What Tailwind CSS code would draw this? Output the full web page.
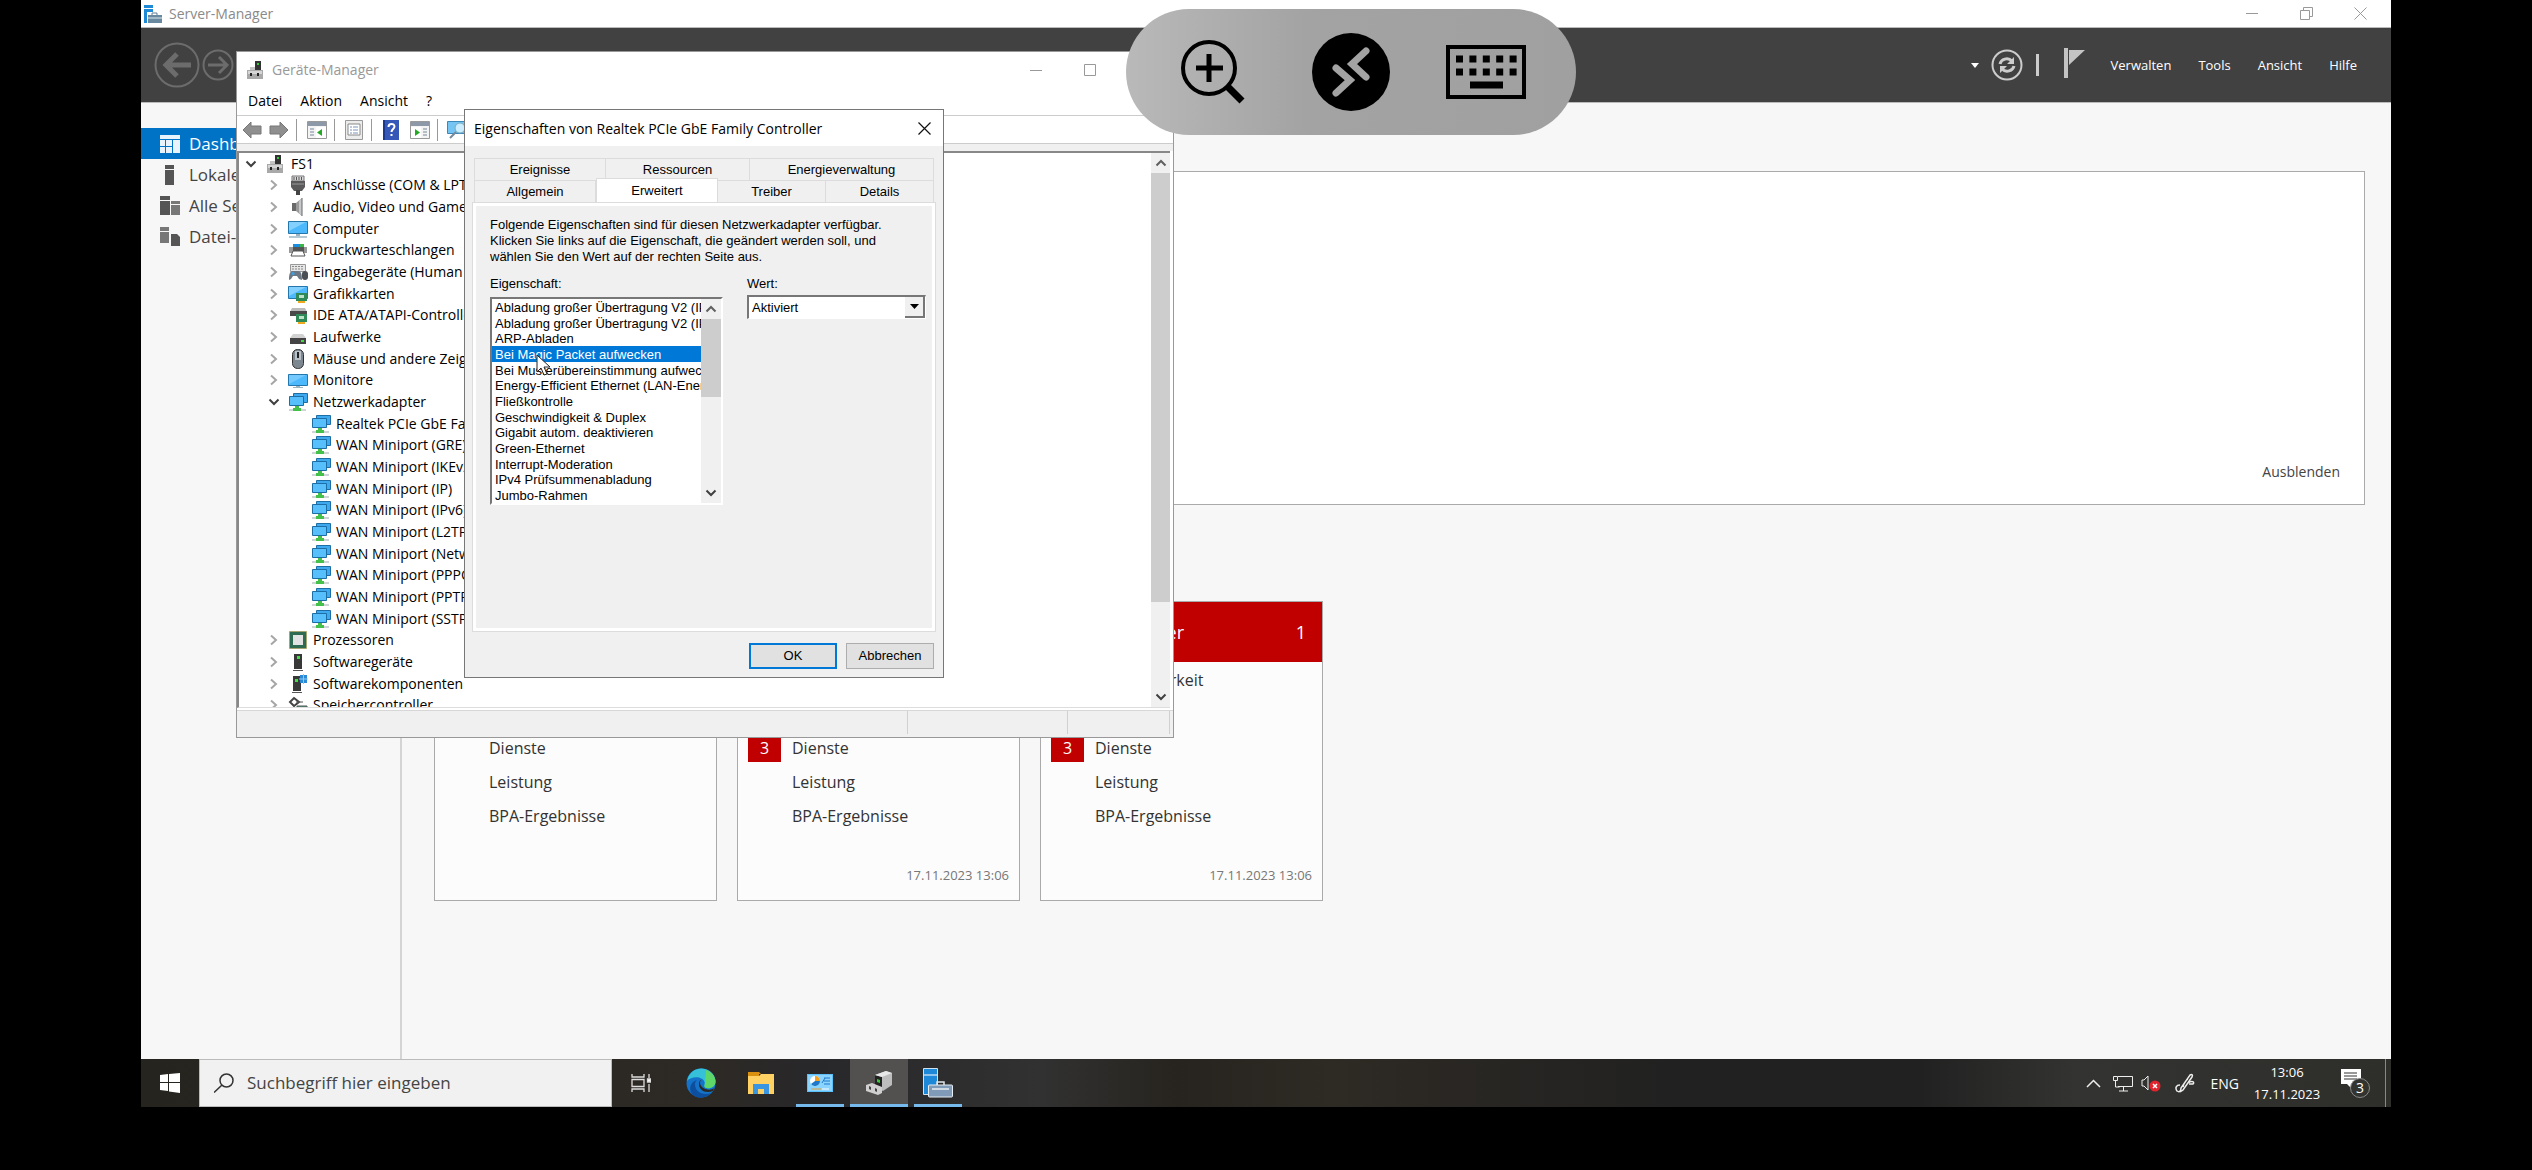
<!DOCTYPE html>
<html lang="de">
  <head>
    <meta charset="UTF-8" />
    <meta name="viewport" content="width=device-width, initial-scale=1.0" />
    <script src="https://cdn.jsdelivr.net/npm/@tailwindcss/browser@4"></script>
    <title>Server-Manager</title>
  </head>
  <body class="bg-black font-['Open_Sans','Noto_Sans',sans-serif]">
    <!-- ICONS -->
    <svg class="hidden">
      <symbol id="i-host" viewBox="0 0 16 18">
        <path d="M8 0h6v9H8z" fill="#333" />
        <path d="M10 2h2v2h-2z" fill="#3c3" />
        <path d="M3 6h5v4H3z" fill="#c4c4c4" />
        <path d="M0 9h16v9H0z" fill="#a9a9a9" />
        <path d="M1 10h14v3H1z" fill="#d5d5d5" />
        <path d="M3 12h2v3H3zM10 12h2v3h-2z" fill="#222" />
      </symbol>
      <symbol id="i-port" viewBox="0 0 20 20">
        <path d="M4 1h12v5H4z" fill="#d8d8d8" stroke="#777" />
        <path d="M6 2v3M8.500 2v3M11 2v3M13.500 2v3" stroke="#555" />
        <path d="M3 6h14v6l-3 4H6l-3-4z" fill="#5a5a5a" />
        <path d="M4 9h12" stroke="#999" />
        <path d="M8 15h4v5H8z" fill="#444" />
      </symbol>
      <symbol id="i-audio" viewBox="0 0 20 20">
        <path d="M4 6h4v8H4z" fill="#6a6a6a" />
        <path d="M8 6l6-5v18l-6-5z" fill="#9b9b9b" />
        <path d="M11 4l3-3v18l-3-3z" fill="#c5c9cc" />
        <path d="M14 1v18" stroke="#666" />
      </symbol>
      <symbol id="i-computer" viewBox="0 0 20 20">
        <path d="M.5 2.500h19v12H.5z" fill="#4db8fb" stroke="#2377ad" />
        <path d="M1 3h17L1 12z" fill="#84d1ff" />
        <path d="M8 15h4v2H8z" fill="#9fb4c0" />
        <path d="M1 17h18v2H1z" fill="#b4c8d4" />
      </symbol>
      <symbol id="i-printer" viewBox="0 0 20 20">
        <path d="M5 4h11v4H5z" fill="#1b8de0" />
        <path d="M12 4h4v4h-4z" fill="#39b54a" />
        <path d="M1 7h18v6H1z" fill="#555" />
        <path d="M1 7h4v6H1zM16 7h3v6h-3z" fill="#999" />
        <path d="M5 11h10l2 5H3z" fill="#fff" stroke="#555" />
      </symbol>
      <symbol id="i-hid" viewBox="0 0 20 20">
        <path d="M2.500 2.500h15v7h-15z" fill="#e6e6e6" stroke="#999" />
        <path d="M4 4.500h12M4 7h12" stroke="#888" stroke-dasharray="2 1" />
        <path d="M1 18c0-6 1-9 4-9h5c3 0 4 3 4 9l-3-1-2-3H5l-2 3z" fill="#6b7883" />
        <circle cx="5" cy="11.500" r="1.500" fill="#3aa0e8" />
        <rect x="14" y="9" width="6" height="9" rx="3" fill="#4a4f55" />
      </symbol>
      <symbol id="i-gpu" viewBox="0 0 20 20">
        <path d="M.5 2.500h19v12H.5z" fill="#4db8fb" stroke="#2377ad" />
        <path d="M1 3h17L1 12z" fill="#84d1ff" />
        <path d="M8 9h11v8H8z" fill="#2f8a57" />
        <path d="M11 11h5v3h-5z" fill="#bfe0c8" />
        <path d="M10 17h7v2h-7z" fill="#f0a91e" />
      </symbol>
      <symbol id="i-ide" viewBox="0 0 20 20">
        <path d="M4 3h13l2 4H2z" fill="#bbb" />
        <path d="M2 6h17v5H2z" fill="#4a4a4a" />
        <path d="M8 9h11v8H8z" fill="#2f8a57" />
        <path d="M11 11h5v3h-5z" fill="#bfe0c8" />
        <path d="M10 17h7v2h-7z" fill="#f0a91e" />
      </symbol>
      <symbol id="i-drive" viewBox="0 0 20 20">
        <path d="M5 7h10l3 4H2z" fill="#d2d2d2" />
        <path d="M2 11h16v6H2z" fill="#444" />
        <path d="M13 13h3v2h-3z" fill="#3fdc3f" />
      </symbol>
      <symbol id="i-mouse" viewBox="0 0 20 20">
        <rect x="4.500" y=".5" width="11" height="19" rx="5" fill="#7d8790" stroke="#333" />
        <path d="M7 2h6v9H7z" fill="#b9c2ca" />
        <path d="M10 3v6" stroke="#222" stroke-width="2" />
      </symbol>
      <symbol id="i-monitor" viewBox="0 0 20 20">
        <path d="M.5 4.500h19v11H.5z" fill="#4db8fb" stroke="#2377ad" />
        <path d="M1 5h17L1 14z" fill="#74caff" />
        <path d="M8 16h4v1H8zM5 17h10v1H5z" fill="#9fb4c0" />
      </symbol>
      <symbol id="i-net" viewBox="0 0 20 20">
        <path d="M5.500 1.500h14v9h-14z" fill="#3fa9f0" stroke="#1d6ea5" />
        <path d="M1.500 4.500h14v9h-14z" fill="#56bffc" stroke="#1d6ea5" />
        <path d="M1 17h17v2H1z" fill="#cfd4d6" />
        <path d="M7 14h4v2h2v3H5v-3h2z" fill="#45c04a" />
      </symbol>
      <symbol id="i-cpu" viewBox="0 0 20 20">
        <rect x="1.500" y="1.500" width="17" height="17" fill="#2f6b50" stroke="#b8943a" stroke-dasharray="1 1" />
        <path d="M5 5h10v10H5z" fill="#e2e2e2" />
      </symbol>
      <symbol id="i-soft" viewBox="0 0 20 20">
        <path d="M6 2h8v15H6z" fill="#383838" />
        <path d="M9 4h3v3H9z" fill="#41e041" />
        <path d="M5 18h10v1H5z" fill="#555" />
      </symbol>
      <symbol id="i-comp" viewBox="0 0 20 20">
        <path d="M5 2h8v15H5z" fill="#383838" />
        <path d="M7 5h3v3H7z" fill="#41e041" />
        <path d="M4 18h10v1H4z" fill="#555" />
        <path d="M12 1h7v8h-7z" fill="#2a8ad6" />
        <path d="M11 5h9M15.500 0v10" stroke="#8cc8f4" />
      </symbol>
      <symbol id="i-storage" viewBox="0 0 20 20">
        <path d="M6 3l5 4-5 4-4-4z" fill="#fff" stroke="#444" stroke-width="2" />
        <path d="M8 7h7M9 11h10v5H9z" stroke="#555" fill="#4d9a77" />
      </symbol>
      <symbol id="i-right" viewBox="0 0 10 12">
        <path d="M2 1.500l5 4.500-5 4.500" fill="none" stroke="#a6a6a6" stroke-width="2" />
      </symbol>
      <symbol id="i-down" viewBox="0 0 12 10">
        <path d="M1.500 2.500L6 7l4.500-4.500" fill="none" stroke="#404040" stroke-width="2" />
      </symbol>
      <symbol id="i-up" viewBox="0 0 12 10">
        <path d="M1.500 7.500L6 3l4.500 4.500" fill="none" stroke="#606060" stroke-width="2" />
      </symbol>
    </svg>

    <div class="min-h-screen flex flex-col px-[141px] pb-[63px]">
      <div class="relative flex-1 flex flex-col bg-[#f7f7f7] overflow-hidden">
        <!-- SERVER-MANAGER TITLE BAR -->
        <div class="h-7 flex items-center bg-white border-b border-[#bbb] pl-[3px] pr-6">
          <svg class="w-[18px] h-[18px]" viewBox="0 0 18 18">
            <path d="M0 0h9v3H0zM0 4h9v14H0z" fill="#1e8ad6" />
            <path d="M3 7h15v11H3z" fill="#fff" />
            <path d="M8 10V8h5v2" fill="none" stroke="#5d7d94" />
            <path d="M4 10h14v8H4z" fill="#68899f" />
            <path d="M4 13h14" stroke="#dfe8ee" />
          </svg>
          <h1 class="ml-[7px] text-[14px] leading-5 text-[#8a8a8a]">Server-Manager</h1>
          <div class="ml-auto flex items-center gap-[41px]">
            <button aria-label="Minimieren">
              <svg class="w-[13px] h-[13px]" viewBox="0 0 13 13"><path d="M0 6.500h12" stroke="#999" /></svg>
            </button>
            <button aria-label="Wiederherstellen">
              <svg class="w-[13px] h-[13px]" viewBox="0 0 13 13">
                <path d="M.5 3.500h9v9h-9zM3.500 3V.5h9v9H10" fill="none" stroke="#999" />
              </svg>
            </button>
            <button aria-label="Schließen">
              <svg class="w-[13px] h-[13px]" viewBox="0 0 13 13"><path d="M.5.5l12 12M12.500.5l-12 12" stroke="#999" /></svg>
            </button>
          </div>
        </div>

        <!-- HEADER -->
        <div class="h-[75px] flex items-center bg-[#414141] border-b border-[#bbb] pl-[13px] pr-[34px]">
          <svg class="w-[46px] h-[46px]" viewBox="0 0 46 46" fill="none" stroke="#6c6c6c">
            <circle cx="23" cy="23" r="21.500" stroke-width="2" />
            <path d="M37 23H12M23 12L12 23l11 11" stroke-width="5" />
          </svg>
          <svg class="ml-0.5 w-8 h-8" viewBox="0 0 32 32" fill="none" stroke="#6c6c6c">
            <circle cx="16" cy="16" r="14.500" stroke-width="2" />
            <path d="M6 16h18M17 8l8 8-8 8" stroke-width="3" />
          </svg>
          <div class="ml-auto flex items-center">
            <svg class="w-2 h-[5px]" viewBox="0 0 8 5"><path d="M0 0h8L4 5z" fill="#fff" /></svg>
            <button aria-label="Aktualisieren" class="ml-3">
              <svg class="w-8 h-8" viewBox="0 0 32 32" fill="none" stroke="#ccc">
                <circle cx="16" cy="16" r="14.500" stroke-width="2" />
                <path d="M9 15c1-5 8-7 12-3M23 17c-1 5-8 7-12 3" stroke-width="3" />
                <path d="M23 8v7h-7zM9 24v-7h7z" fill="#ccc" stroke="none" />
              </svg>
            </button>
            <div class="ml-[13px] w-[3px] h-[22px] bg-[#ccc]"></div>
            <svg class="ml-[25px] mb-1 w-[21px] h-[30px]" viewBox="0 0 21 30">
              <path d="M0 0h4v30H0zM5 2h16L5 17z" fill="#c4c4c4" />
            </svg>
            <nav class="ml-[26px] flex gap-[27px] text-[13px] leading-5 text-white">
              <a href="#">Verwalten</a>
              <a href="#">Tools</a>
              <a href="#">Ansicht</a>
              <a href="#">Hilfe</a>
            </nav>
          </div>
        </div>

        <!-- CONTENT -->
        <div class="flex-1 flex">
          <nav class="w-[261px] shrink-0 border-r-2 border-[#d4d4d4] pt-[25px] text-[17px] leading-[31px] text-[#444]">
            <a href="#" class="flex items-center pl-[19px] bg-[#0173c7] text-white">
              <svg class="w-5 h-[18px]" viewBox="0 0 20 18" fill="#e8f3fb">
                <path d="M0 0h20v4H0zM0 5h5v6H0zM0 12h5v6H0zM6 5h6v6H6zM6 12h6v6H6zM13 5h7v13h-7z" />
              </svg>
              <span class="ml-[9px]">Dashboard</span>
            </a>
            <a href="#" class="flex items-center pl-[19px]">
              <svg class="w-5 h-5" viewBox="0 0 20 20" fill="#555"><path d="M5 0h9v4H5zM5 5h9v15H5z" /></svg>
              <span class="ml-[9px]">Lokaler Server</span>
            </a>
            <a href="#" class="flex items-center pl-[19px]">
              <svg class="w-5 h-5" viewBox="0 0 20 20" fill="#555">
                <path d="M0 0h10v4H0zM0 5h10v14H0z" /><path d="M11 5h9v3h-9zM11 9h9v10h-9z" fill="#777" />
              </svg>
              <span class="ml-[9px]">Alle Server</span>
            </a>
            <a href="#" class="flex items-center pl-[19px]">
              <svg class="w-5 h-5" viewBox="0 0 20 20" fill="#777">
                <path d="M0 0h9v4H0zM0 5h9v11H0z" /><path d="M11 7h6l3 3v9h-9z" fill="#555" />
              </svg>
              <span class="ml-[9px]">Datei-/Speicherdienste</span>
            </a>
          </nav>

          <main class="flex-1 pt-[68px] pl-8 pr-[26px]">
            <div class="h-[334px] flex justify-end items-end bg-white border border-[#aaa] pr-6 pb-[22px]">
              <button class="text-[14px] leading-5 text-[#444]">Ausblenden</button>
            </div>

            <div class="mt-[96px] flex gap-5 text-[16px] text-[#333]">
              <section class="w-[283px] h-[300px] flex flex-col bg-[#fcfcfc] border border-[#aaa]">
                <h2 class="h-[60px] flex items-center px-4 text-[18px]">Datei-/Speicherdienste</h2>
                <ul class="mt-px pl-[54px] leading-[34px]">
                  <li>Verwaltbarkeit</li>
                  <li>Ereignisse</li>
                  <li>Dienste</li>
                  <li>Leistung</li>
                  <li>BPA-Ergebnisse</li>
                </ul>
              </section>
              <section class="w-[283px] h-[300px] flex flex-col bg-[#fcfcfc] border border-[#aaa]">
                <h2 class="h-[60px] flex items-center px-4 text-[18px] bg-[#c00000] text-white">Lokaler Server</h2>
                <ul class="mt-px pl-[10px] leading-[34px]">
                  <li class="pl-11">Verwaltbarkeit</li>
                  <li class="pl-11">Ereignisse</li>
                  <li class="flex items-center">
                    <span class="w-[33px] h-7 mr-[11px] bg-[#c00000] text-white text-center leading-7">3</span>Dienste
                  </li>
                  <li class="pl-11">Leistung</li>
                  <li class="pl-11">BPA-Ergebnisse</li>
                </ul>
                <p class="mt-auto mb-[13px] pr-[10px] text-right text-[13px] leading-6 text-[#777]">17.11.2023 13:06</p>
              </section>
              <section class="w-[283px] h-[300px] flex flex-col bg-[#fcfcfc] border border-[#aaa]">
                <h2 class="h-[60px] flex items-center pl-[54px] pr-4 text-[18px] bg-[#c00000] text-white">
                  Alle Server <span class="ml-auto">1</span>
                </h2>
                <ul class="mt-px pl-[10px] leading-[34px]">
                  <li class="pl-11">Verwaltbarkeit</li>
                  <li class="pl-11">Ereignisse</li>
                  <li class="flex items-center">
                    <span class="w-[33px] h-7 mr-[11px] bg-[#c00000] text-white text-center leading-7">3</span>Dienste
                  </li>
                  <li class="pl-11">Leistung</li>
                  <li class="pl-11">BPA-Ergebnisse</li>
                </ul>
                <p class="mt-auto mb-[13px] pr-[10px] text-right text-[13px] leading-6 text-[#777]">17.11.2023 13:06</p>
              </section>
            </div>
          </main>
        </div>

        <!-- TASKBAR -->
        <footer class="h-12 flex bg-[linear-gradient(90deg,#26241f_0%,#2d2a25_25%,#28272a_30%,#313131_40%,#27241f_46%,#2e2a24_53%,#212121_68%,#212121_79%,#333331_86%,#2e2e2b_100%)]">
          <button aria-label="Start" class="w-[58px] flex items-center justify-center">
            <svg class="w-5 h-5" viewBox="0 0 20 20" fill="#fff">
              <path d="M0 2l8-1v8H0zM9 1l11-1v9H9zM0 10h8v8l-8-1zM9 10h11v10L9 18.500z" />
            </svg>
          </button>
          <label class="w-[413px] flex items-center bg-[#f1f1f1] border border-[#bbb] pl-[14px]">
            <svg class="w-5 h-5 shrink-0" viewBox="0 0 20 20" fill="none" stroke="#333" stroke-width="1.500">
              <circle cx="12.500" cy="7.500" r="6.500" /><path d="M8 12L0 19.500" />
            </svg>
            <input
              type="text"
              aria-label="Suche"
              placeholder="Suchbegriff hier eingeben"
              class="ml-[13px] w-full text-[17px] placeholder:text-[#444] outline-none"
            />
          </label>
          <button aria-label="Taskansicht" class="w-[58px] flex items-center justify-center">
            <svg class="w-5 h-[18px]" viewBox="0 0 20 18" fill="none" stroke="#ddd" stroke-width="1.300">
              <path d="M1 0v3h12V0M1 18v-3h12v3M1 5.500h12v7H1zM18 0v4M18 10v8" /><path d="M16.500 5h3v3h-3z" fill="#fff" />
            </svg>
          </button>
          <button aria-label="Edge" class="w-[62px] flex items-center justify-center">
            <svg class="w-[30px] h-[30px]" viewBox="0 0 30 30">
              <circle cx="15" cy="15" r="14.500" fill="#1473c9" />
              <path d="M1 13C3 3 11 0 16 .5 25 1 30 8 29.500 14c-.5 5-5 7-9 6-4-1-1-3-2-6-2-6-13-6-17.500-1z" fill="#35c1d8" />
              <path d="M20 2c6 2 10 8 9.500 12-.5 5-5 7-9 6-3-1-2-2-1.500-5z" fill="#5fd668" />
              <path d="M9 16c0 8 8 12 16 9-5 6-15 6-19 1-4-6-1-12 5-14-1 1-2 2-2 4z" fill="#0d4f9e" />
              <path d="M15 12c-2 2-1 7 4 9 4 1 7 1 9-1l-1 3c-8 3-14-1-14-7 0-2 1-4 2-4z" fill="#2a2825" />
            </svg>
          </button>
          <button aria-label="Explorer" class="w-[58px] flex items-center justify-center">
            <svg class="w-[26px] h-[22px]" viewBox="0 0 26 22">
              <path d="M0 0h11l2 2h-2v2H0z" fill="#d9900f" />
              <path d="M0 4h11l2-2h13v20H0z" fill="#ffd163" />
              <path d="M5 12h16v10h-5v-5h-6v5H5z" fill="#3a95e0" />
            </svg>
          </button>
          <button aria-label="Systemsteuerung" class="w-[60px] flex flex-col items-center">
            <svg class="mt-[15px] w-[26px] h-[18px]" viewBox="0 0 26 18">
              <path d="M0 0h26v18H0z" fill="#5cc0fb" /><path d="M1 1h24v16H1z" fill="#8ad4ff" />
              <circle cx="8" cy="7" r="5" fill="#fff" /><path d="M8 7V2a5 5 0 0 1 5 5z" fill="#f3a01c" />
              <path d="M8 7h5a5 5 0 0 1-9 3z" fill="#2079c8" />
              <path d="M17 4h6M17 7h6M17 10h6M15 9l3-5" stroke="#2079c8" /><path d="M4 15h10" stroke="#e2a13a" /><path d="M15 15h7" stroke="#fff" />
            </svg>
            <span class="mt-auto w-12 h-[3px] bg-[#76b9ed]"></span>
          </button>
          <button aria-label="Geräte-Manager" class="w-[58px] flex flex-col items-center bg-[#525150]">
            <svg class="mt-3 w-[26px] h-6" viewBox="0 0 26 24">
              <path d="M9 4l11-4 6 2v12l-9 6-8-4z" fill="#bdbdbd" /><path d="M9 4l7 2v12l-7-3z" fill="#222" />
              <path d="M9 4l11-4 6 2-10 4z" fill="#e8e8e8" /><path d="M11 8l3 1v3l-3-1z" fill="#3c3" />
              <path d="M0 14l6-2 10 4v6l-4 2L0 20z" fill="#cfcfcf" /><path d="M3 15l2 1v3l-2-1zM9 17l2 1v3l-2-1z" fill="#444" />
            </svg>
            <span class="mt-auto w-full h-[3px] bg-[#76b9ed]"></span>
          </button>
          <button aria-label="Server-Manager" class="w-[60px] flex flex-col items-center">
            <svg class="mt-[9px] w-[30px] h-[30px]" viewBox="0 0 30 30">
              <path d="M.5.5h14v26H.5z" fill="#1e88d8" stroke="#cfe2f0" /><path d="M1 7h13" stroke="#fff" />
              <path d="M14 18v-4h7v4" fill="none" stroke="#dfe6ec" stroke-width="1.500" />
              <rect x="5.500" y="17" width="24" height="12" rx="1" fill="#7f9bb8" stroke="#e8eef3" />
              <path d="M9 21h17" stroke="#e8eef3" stroke-width="1.500" />
            </svg>
            <span class="mt-auto w-12 h-[3px] bg-[#76b9ed]"></span>
          </button>

          <!-- TRAY -->
          <div class="ml-auto flex items-center text-white">
            <svg class="w-[15px] h-[9px]" viewBox="0 0 15 9"><path d="M1 8l6.500-6.500L14 8" fill="none" stroke="#eee" stroke-width="1.500" /></svg>
            <svg class="ml-3 w-5 h-[17px]" viewBox="0 0 20 17" fill="none" stroke="#eee">
              <path d="M5 1.500h14.500v10H5M10.500 12v4M6 16h9M.5 1.500h4v4h-4zM2.500 6v6h4" />
            </svg>
            <svg class="ml-2 w-5 h-[18px]" viewBox="0 0 20 18">
              <path d="M1 6h2l4-4v14l-4-4H1z" fill="none" stroke="#eee" />
              <circle cx="14" cy="12" r="5.500" fill="#e0252f" /><path d="M12 10l4 4M16 10l-4 4" stroke="#fff" stroke-width="1.500" />
            </svg>
            <svg class="ml-[14px] w-5 h-5" viewBox="0 0 20 20" fill="none" stroke="#eee" stroke-width="1.500">
              <path d="M5 12c-4 0-5 3-3 6 3 2 4-1 4-3L15 2c2-1 3 0 2 2L8 17l-3 2M13 6c-3 2-4 4-5 8M13 10c4-3 7-1 5 1h-4" />
            </svg>
            <span class="ml-4 text-[14px]">ENG</span>
            <div class="ml-4 w-16 flex flex-col items-center text-[13px] leading-[22px] whitespace-nowrap">
              <span>13:06</span>
              <span>17.11.2023</span>
            </div>
            <button aria-label="Benachrichtigungen" class="ml-[22px]">
              <svg class="w-[30px] h-[30px]" viewBox="0 0 30 30">
                <path d="M0 1h20v15h-9v5l-5-5H0z" fill="#fff" />
                <path d="M3 5h13M3 8h13M3 11h13" stroke="#333" />
                <circle cx="19" cy="20" r="9.500" fill="#333330" stroke="#888" />
                <text x="19" y="25" fill="#fff" font-size="14" text-anchor="middle">3</text>
              </svg>
            </button>
            <div class="ml-[14px] mr-[5px] w-px h-12 bg-[#888]"></div>
          </div>
        </footer>

        <!-- DEVICE MANAGER -->
        <section class="absolute left-[95px] top-[51px] w-[938px] h-[687px] flex flex-col bg-white border border-[#999] text-[14px] leading-5">
          <div class="h-[35px] shrink-0 flex items-center pl-[10px]">
            <svg class="w-4 h-[18px]"><use href="#i-host" /></svg>
            <h2 class="ml-[9px] leading-5 text-[#999]">Geräte-Manager</h2>
            <button aria-label="Minimieren" class="ml-auto">
              <svg class="w-3 h-3" viewBox="0 0 12 12"><path d="M0 6.500h12" stroke="#999" /></svg>
            </button>
            <button aria-label="Maximieren" class="ml-[42px] mr-[77px]">
              <svg class="w-3 h-3" viewBox="0 0 12 12"><path d="M.5.5h11v11H.5z" fill="none" stroke="#999" /></svg>
            </button>
          </div>
          <nav class="h-7 shrink-0 flex items-center gap-[18px] pl-[11px] text-black">
            <button>Datei</button>
            <button>Aktion</button>
            <button>Ansicht</button>
            <button>?</button>
          </nav>
          <div class="h-[29px] shrink-0 flex items-center border-y border-[#ccc] pl-[5px]">
            <svg class="w-5 h-[18px]" viewBox="0 0 20 18"><path d="M1 9l8-8v4h10v8H9v4z" fill="#8f8f8f" stroke="#777" /></svg>
            <svg class="ml-[7px] w-5 h-[18px]" viewBox="0 0 20 18"><path d="M19 9l-8-8v4H1v8h10v4z" fill="#8f8f8f" stroke="#777" /></svg>
            <span class="ml-[7px] w-px h-[22px] bg-[#999]"></span>
            <svg class="ml-[10px] w-5 h-[18px]" viewBox="0 0 20 18">
              <path d="M.5.5h19v17H.5z" fill="#f4f4f4" stroke="#999" /><path d="M1 1h18v4H1z" fill="#8d99a8" />
              <path d="M3 8h4M3 11h4M3 14h4" stroke="#789" /><path d="M9 6h10v11H9z" fill="#fff" /><path d="M15 8v7l-5-3.500z" fill="#25a825" />
            </svg>
            <span class="ml-[7px] w-px h-[22px] bg-[#999]"></span>
            <svg class="ml-[10px] w-[18px] h-5" viewBox="0 0 18 20">
              <path d="M.5.5h17v19H.5z" fill="#ececec" stroke="#999" /><path d="M3 4h12v11H3z" fill="#fff" stroke="#888" />
              <path d="M5 7h2M5 10h2M5 13h2M8 7h5M8 10h5M8 13h5" stroke="#7a93b8" />
            </svg>
            <span class="ml-2 w-px h-[22px] bg-[#999]"></span>
            <svg class="ml-[11px] w-4 h-5" viewBox="0 0 16 20">
              <path d="M0 0h16v20H0z" fill="#3457b8" /><path d="M0 0h2v20H0z" fill="#1c388c" />
              <path d="M5.500 7c0-4 6-4 6-.5 0 2.500-3 2.500-3 5.500M8.500 14v2" fill="none" stroke="#fff" stroke-width="2" />
            </svg>
            <svg class="ml-[11px] w-5 h-[18px]" viewBox="0 0 20 18">
              <path d="M.5.5h19v17H.5z" fill="#f4f4f4" stroke="#999" /><path d="M1 1h18v4H1z" fill="#8d99a8" />
              <path d="M13 8h4M13 11h4M13 14h4" stroke="#789" /><path d="M1 6h10v11H1z" fill="#fff" /><path d="M5 8v7l5-3.500z" fill="#25a825" />
            </svg>
            <span class="ml-[7px] w-px h-[22px] bg-[#999]"></span>
            <svg class="ml-[9px] w-5 h-[18px]" viewBox="0 0 20 18">
              <path d="M.5.5h19v12H.5z" fill="#74c4f4" stroke="#3b87b8" />
              <circle cx="13" cy="7" r="5" fill="#c9ecff" stroke="#7ab" /><path d="M9 11l-6 6" stroke="#789" stroke-width="2" />
            </svg>
          </div>
          <div class="h-[7px] shrink-0 bg-[#f0f0f0]"></div>
          <div class="h-[557px] shrink-0 flex bg-white border-t-2 border-l-2 border-b border-t-[#888] border-l-[#888] border-b-[#ddd] mr-[3px] overflow-hidden">
            <ul class="flex-1 h-[563px] flex flex-col text-black whitespace-nowrap *:flex-1 *:flex *:items-center">
              <li class="pl-[6px]"><svg class="w-3 h-[10px] mr-[10px]"><use href="#i-down" /></svg><svg class="w-4 h-[18px] mr-2"><use href="#i-host" /></svg>FS1</li>
              <li class="pl-[30px]"><svg class="w-[10px] h-3 mr-[9px]"><use href="#i-right" /></svg><svg class="w-5 h-5 mr-[5px]"><use href="#i-port" /></svg>Anschlüsse (COM &amp; LPT)</li>
              <li class="pl-[30px]"><svg class="w-[10px] h-3 mr-[9px]"><use href="#i-right" /></svg><svg class="w-5 h-5 mr-[5px]"><use href="#i-audio" /></svg>Audio, Video und Gamecontroller</li>
              <li class="pl-[30px]"><svg class="w-[10px] h-3 mr-[9px]"><use href="#i-right" /></svg><svg class="w-5 h-5 mr-[5px]"><use href="#i-computer" /></svg>Computer</li>
              <li class="pl-[30px]"><svg class="w-[10px] h-3 mr-[9px]"><use href="#i-right" /></svg><svg class="w-5 h-5 mr-[5px]"><use href="#i-printer" /></svg>Druckwarteschlangen</li>
              <li class="pl-[30px]"><svg class="w-[10px] h-3 mr-[9px]"><use href="#i-right" /></svg><svg class="w-5 h-5 mr-[5px]"><use href="#i-hid" /></svg>Eingabegeräte (Human Interface Devices)</li>
              <li class="pl-[30px]"><svg class="w-[10px] h-3 mr-[9px]"><use href="#i-right" /></svg><svg class="w-5 h-5 mr-[5px]"><use href="#i-gpu" /></svg>Grafikkarten</li>
              <li class="pl-[30px]"><svg class="w-[10px] h-3 mr-[9px]"><use href="#i-right" /></svg><svg class="w-5 h-5 mr-[5px]"><use href="#i-ide" /></svg>IDE ATA/ATAPI-Controller</li>
              <li class="pl-[30px]"><svg class="w-[10px] h-3 mr-[9px]"><use href="#i-right" /></svg><svg class="w-5 h-5 mr-[5px]"><use href="#i-drive" /></svg>Laufwerke</li>
              <li class="pl-[30px]"><svg class="w-[10px] h-3 mr-[9px]"><use href="#i-right" /></svg><svg class="w-5 h-5 mr-[5px]"><use href="#i-mouse" /></svg>Mäuse und andere Zeigegeräte</li>
              <li class="pl-[30px]"><svg class="w-[10px] h-3 mr-[9px]"><use href="#i-right" /></svg><svg class="w-5 h-5 mr-[5px]"><use href="#i-monitor" /></svg>Monitore</li>
              <li class="pl-[29px]"><svg class="w-3 h-[10px] mr-2"><use href="#i-down" /></svg><svg class="w-5 h-5 mr-[5px]"><use href="#i-net" /></svg>Netzwerkadapter</li>
              <li class="pl-[72px]"><svg class="w-5 h-5 mr-[5px]"><use href="#i-net" /></svg>Realtek PCIe GbE Family Controller</li>
              <li class="pl-[72px]"><svg class="w-5 h-5 mr-[5px]"><use href="#i-net" /></svg>WAN Miniport (GRE)</li>
              <li class="pl-[72px]"><svg class="w-5 h-5 mr-[5px]"><use href="#i-net" /></svg>WAN Miniport (IKEv2)</li>
              <li class="pl-[72px]"><svg class="w-5 h-5 mr-[5px]"><use href="#i-net" /></svg>WAN Miniport (IP)</li>
              <li class="pl-[72px]"><svg class="w-5 h-5 mr-[5px]"><use href="#i-net" /></svg>WAN Miniport (IPv6)</li>
              <li class="pl-[72px]"><svg class="w-5 h-5 mr-[5px]"><use href="#i-net" /></svg>WAN Miniport (L2TP)</li>
              <li class="pl-[72px]"><svg class="w-5 h-5 mr-[5px]"><use href="#i-net" /></svg>WAN Miniport (Network Monitor)</li>
              <li class="pl-[72px]"><svg class="w-5 h-5 mr-[5px]"><use href="#i-net" /></svg>WAN Miniport (PPPOE)</li>
              <li class="pl-[72px]"><svg class="w-5 h-5 mr-[5px]"><use href="#i-net" /></svg>WAN Miniport (PPTP)</li>
              <li class="pl-[72px]"><svg class="w-5 h-5 mr-[5px]"><use href="#i-net" /></svg>WAN Miniport (SSTP)</li>
              <li class="pl-[30px]"><svg class="w-[10px] h-3 mr-[9px]"><use href="#i-right" /></svg><svg class="w-5 h-5 mr-[5px]"><use href="#i-cpu" /></svg>Prozessoren</li>
              <li class="pl-[30px]"><svg class="w-[10px] h-3 mr-[9px]"><use href="#i-right" /></svg><svg class="w-5 h-5 mr-[5px]"><use href="#i-soft" /></svg>Softwaregeräte</li>
              <li class="pl-[30px]"><svg class="w-[10px] h-3 mr-[9px]"><use href="#i-right" /></svg><svg class="w-5 h-5 mr-[5px]"><use href="#i-comp" /></svg>Softwarekomponenten</li>
              <li class="pl-[30px]"><svg class="w-[10px] h-3 mr-[9px]"><use href="#i-right" /></svg><svg class="w-5 h-5 mr-[5px]"><use href="#i-storage" /></svg>Speichercontroller</li>
            </ul>
            <div class="w-[19px] flex flex-col items-center bg-[#f0f0f0] py-[5px]">
              <svg class="w-3 h-[10px] shrink-0"><use href="#i-up" /></svg>
              <div class="mt-[5px] w-full h-[429px] bg-[#cdcdcd]"></div>
              <svg class="mt-auto w-3 h-[10px] shrink-0"><use href="#i-down" /></svg>
            </div>
          </div>
          <div class="flex-1 mt-0.5 flex justify-end bg-[#f0f0f0] border-t border-[#d7d7d7] pr-[3px] pb-[3px]">
            <div class="w-[160px] border-l border-[#d0d0d0]"></div>
            <div class="w-[103px] border-x border-[#d0d0d0]"></div>
          </div>
        </section>

        <!-- PROPERTIES DIALOG -->
        <section class="absolute left-[323px] top-[109px] w-[480px] h-[569px] flex flex-col bg-[#f0f0f0] border border-[#777] text-[13px] text-black font-['Liberation_Sans',Arial,sans-serif]">
          <div class="h-9 flex items-center justify-between bg-white pl-[9px] pr-3">
            <h2 class="text-[14px] font-['Open_Sans','Noto_Sans',sans-serif]">Eigenschaften von Realtek PCIe GbE Family Controller</h2>
            <button aria-label="Schließen">
              <svg class="w-[13px] h-[13px]" viewBox="0 0 13 13"><path d="M.5.5l12 12M12.500.5l-12 12" stroke="#111" stroke-width="1.200" /></svg>
            </button>
          </div>
          <div class="mt-3 mx-[9px] flex flex-col">
            <div class="flex h-[22px] *:border *:border-b-0 *:border-[#dcdcdc] leading-5">
              <button class="w-[132px]">Ereignisse</button>
              <button class="w-[144px] border-l-0!">Ressourcen</button>
              <button class="flex-1 border-l-0!">Energieverwaltung</button>
            </div>
            <div class="flex h-[22px] items-end leading-5">
              <button class="w-[122px] h-[22px] border border-b-0 border-[#dcdcdc]">Allgemein</button>
              <button class="w-[122px] h-6 bg-white border border-b-0 border-[#dcdcdc]">Erweitert</button>
              <button class="w-[107px] h-[22px] border border-x-0 border-b-0 border-[#dcdcdc]">Treiber</button>
              <button class="flex-1 h-[22px] border border-b-0 border-[#dcdcdc]">Details</button>
            </div>
          </div>
          <div class="mx-[7px] h-[430px] bg-white border border-[#dcdcdc] p-[3px]">
            <div class="h-full bg-[#f0f0f0] pl-[14px] pr-[6px] pt-[11px]">
              <p class="leading-4">
                Folgende Eigenschaften sind für diesen Netzwerkadapter verfügbar.<br />
                Klicken Sie links auf die Eigenschaft, die geändert werden soll, und<br />
                wählen Sie den Wert auf der rechten Seite aus.
              </p>
              <div class="mt-[9px] flex items-start justify-between">
                <div class="flex flex-col">
                  <label for="eigenschaft" class="leading-5">Eigenschaft:</label>
                  <div class="mt-[3px] w-[233px] h-[208px] flex bg-white border-2 border-t-[#777] border-l-[#777] border-r-white border-b-white">
                    <select
                      id="eigenschaft"
                      size="13"
                      class="w-[209px] h-[204px] appearance-none overflow-hidden outline-none *:min-h-0 *:pl-[3px] *:pr-0 *:pb-0 *:pt-px *:nth-[3n]:pt-0 *:checked:bg-linear-to-r *:checked:from-[#0078d7] *:checked:to-[#0078d7] *:checked:text-white"
                    >
                      <option>Abladung großer Übertragung V2 (IPv4)</option>
                      <option>Abladung großer Übertragung V2 (IPv6)</option>
                      <option>ARP-Abladen</option>
                      <option selected>Bei Magic Packet aufwecken</option>
                      <option>Bei Musterübereinstimmung aufwecken</option>
                      <option>Energy-Efficient Ethernet (LAN-Energiesparen)</option>
                      <option>Fließkontrolle</option>
                      <option>Geschwindigkeit &amp; Duplex</option>
                      <option>Gigabit autom. deaktivieren</option>
                      <option>Green-Ethernet</option>
                      <option>Interrupt-Moderation</option>
                      <option>IPv4 Prüfsummenabladung</option>
                      <option>Jumbo-Rahmen</option>
                    </select>
                    <div class="flex-1 flex flex-col items-center bg-[#f0f0f0] py-[5px]">
                      <svg class="w-3 h-[10px] shrink-0"><use href="#i-up" /></svg>
                      <div class="mt-[5px] w-full h-[78px] bg-[#cdcdcd]"></div>
                      <svg class="mt-auto w-3 h-[10px] shrink-0"><use href="#i-down" /></svg>
                    </div>
                  </div>
                </div>
                <div class="flex flex-col">
                  <label for="wert" class="leading-5">Wert:</label>
                  <div class="relative mt-px w-[179px] h-6 border-t-2 border-l-2 border-r border-b border-t-[#777] border-l-[#777] border-r-white border-b-white bg-white">
                    <select id="wert" class="w-full h-full appearance-none pl-[3px] leading-5">
                      <option>Aktiviert</option>
                    </select>
                    <span class="pointer-events-none absolute right-0 top-0 w-5 h-[21px] flex items-center justify-center bg-[#f0f0f0] border-r-2 border-b-2 border-[#777]">
                      <svg class="w-[9px] h-[5px]" viewBox="0 0 9 5"><path d="M0 0h9L4.500 5z" /></svg>
                    </span>
                  </div>
                </div>
              </div>
            </div>
          </div>
          <div class="mt-[11px] flex justify-end gap-[9px] pr-[9px]">
            <button class="w-[88px] h-[26px] bg-[#e1e1e1] border-2 border-[#0078d7]">OK</button>
            <button class="w-[88px] h-[26px] bg-[#e1e1e1] border border-[#adadad]">Abbrechen</button>
          </div>
        </section>

        <!-- MOUSE POINTER -->
        <svg class="absolute left-[395px] top-[354px] w-4 h-[23px]" viewBox="0 0 16 23">
          <path d="M1 1v17l4-4 3 7 3-1-3-7h6z" fill="#fff" stroke="#222" />
        </svg>

        <!-- REMOTE TOOLBAR -->
        <div class="absolute left-[985px] top-[9px] w-[450px] h-[126px] rounded-full flex items-center bg-linear-to-r from-[#b9b9b9] via-[#a3a3a3] via-40% to-[#a0a0a0] pl-[55px]">
          <button aria-label="Zoom">
            <svg class="w-16 h-16" viewBox="0 0 64 64" fill="none" stroke="#000">
              <circle cx="28" cy="28" r="26" stroke-width="4" />
              <path d="M28 14v28M15 28h27" stroke-width="5" /><path d="M46 46l15 15" stroke-width="7" />
            </svg>
          </button>
          <button aria-label="Verbindung" class="ml-[67px]">
            <svg class="w-[78px] h-[78px]" viewBox="0 0 78 78">
              <circle cx="39" cy="39" r="39" />
              <path d="M24 35l14 12-14 13M54 18L40 31l14 13" fill="none" stroke="#a3a3a3" stroke-width="7" stroke-linecap="round" />
            </svg>
          </button>
          <button aria-label="Tastatur" class="ml-14">
            <svg class="w-20 h-[54px]" viewBox="0 0 80 54">
              <rect x="2" y="2" width="76" height="50" fill="none" stroke="#000" stroke-width="4" />
              <path d="M10 14h61M10 27h61" stroke="#000" stroke-width="7" stroke-dasharray="7 6.400" />
              <path d="M24 40h33" stroke="#000" stroke-width="7" />
            </svg>
          </button>
        </div>
      </div>
    </div>
  </body>
</html>
